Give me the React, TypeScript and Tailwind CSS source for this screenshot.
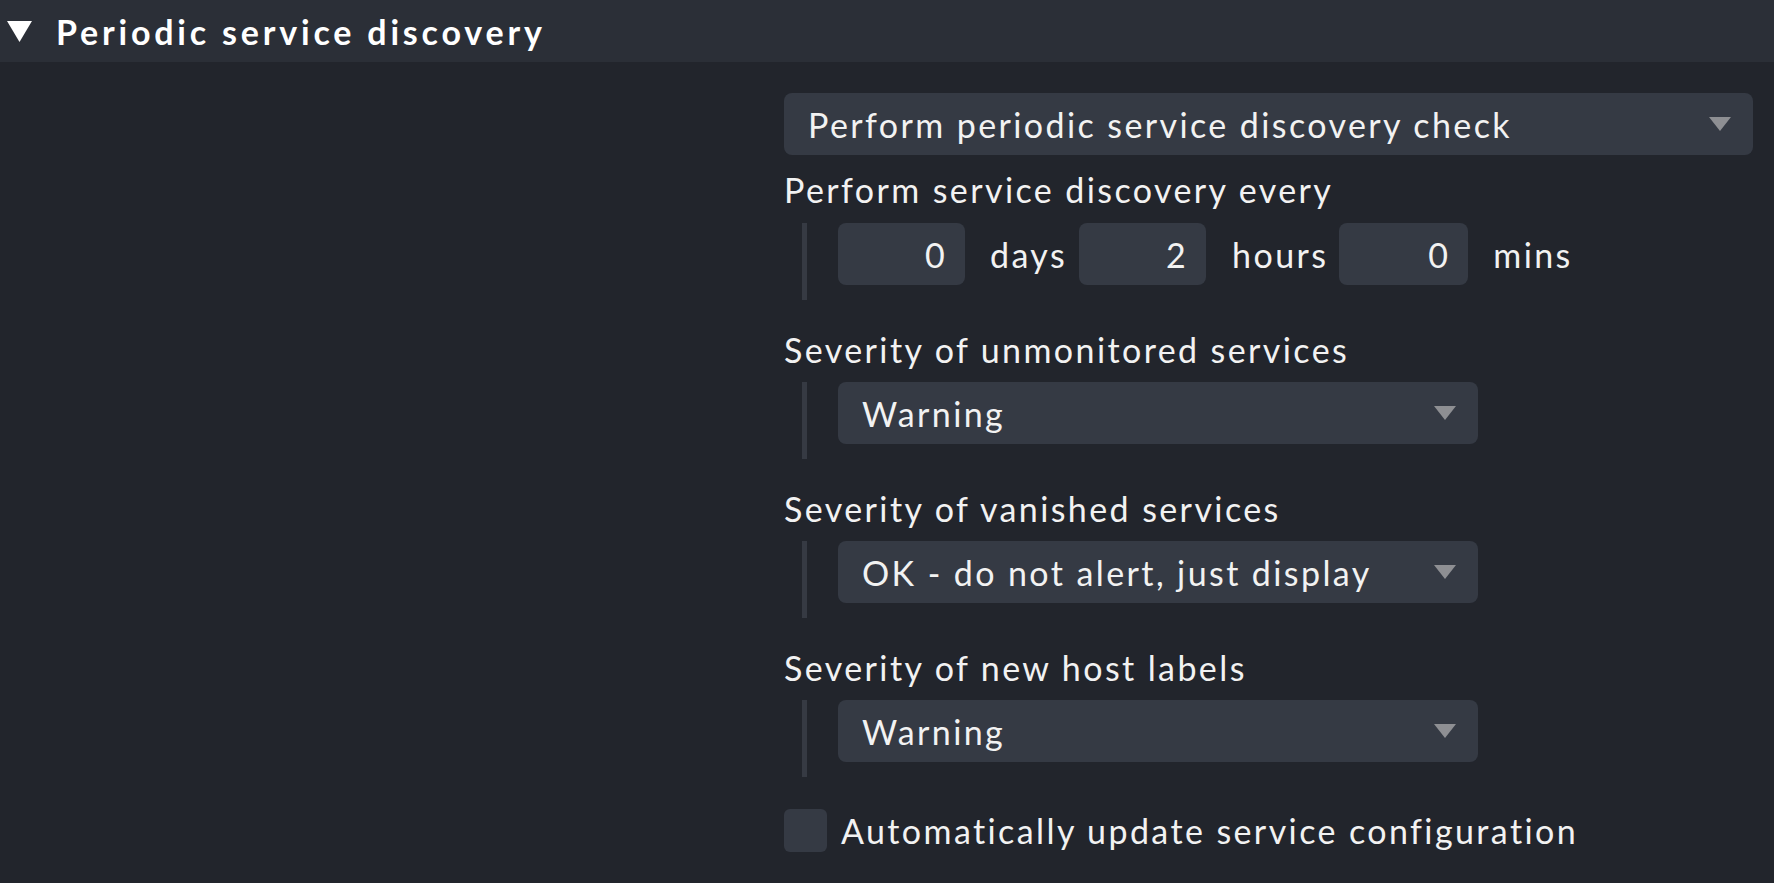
import React from "react";

const Arrow = () => (
  <svg width="22" height="14" viewBox="0 0 22 14" className="shrink-0">
    <polygon points="0,0 22,0 11,14" fill="#8e8f93" />
  </svg>
);

const Select = ({ text, wide }: { text: string; wide?: boolean }) => (
  <div
    className={
      "flex h-[62px] items-center justify-between rounded-[8px] bg-[#353a44] pl-[24px] pr-[22px] " +
      (wide ? "w-[969px]" : "w-[640px]")
    }
  >
    <span>{text}</span>
    <Arrow />
  </div>
);

const NumBox = ({ value, wide }: { value: string; wide?: boolean }) => (
  <div
    className={
      "flex h-[62px] items-center justify-end rounded-[8px] bg-[#353a44] pr-[18px] " +
      (wide ? "w-[129px]" : "w-[127px]")
    }
  >
    {value}
  </div>
);

const Indented = ({ children }: { children: React.ReactNode }) => (
  <div className="ml-[18px] flex border-l-[5px] border-[#363a43] pb-[15px] pl-[31px]">
    {children}
  </div>
);

const Label = ({ text, top }: { text: string; top: string }) => (
  <div className={"h-[44px] leading-[44px] " + top}>{text}</div>
);

const severities = [
  { label: "Severity of unmonitored services", value: "Warning" },
  { label: "Severity of vanished services", value: "OK - do not alert, just display" },
  { label: "Severity of new host labels", value: "Warning" },
];

export default function App() {
  return (
    <div
      className="h-[883px] w-[1774px] overflow-hidden bg-[#22252c] text-[34px] tracking-[2.4px] text-[#f2f2f2]"
      style={{ fontFamily: "Lato, 'Noto Sans', sans-serif" }}
    >
      <div className="flex h-[62px] items-center bg-[#2b2f37] pl-[7px]">
        <svg width="25" height="21" viewBox="0 0 25 21">
          <polygon points="0,0 25,0 12.5,21" fill="#ffffff" />
        </svg>
        <span className="ml-[24px] text-[34px] font-bold tracking-[3.8px] text-white">
          Periodic service discovery
        </span>
      </div>

      <div className="grid grid-cols-[784px_1fr] pt-[31px]">
        <div />
        <div className="flex flex-col">
          <Select text="Perform periodic service discovery check" wide />
          <Label text="Perform service discovery every" top="mt-[13px]" />
          <div className="mt-[11px]">
            <Indented>
              <div className="flex items-center">
                <NumBox value="0" />
                <span className="ml-[25px] mr-[12px]">days</span>
                <NumBox value="2" />
                <span className="ml-[26px] mr-[11px]">hours</span>
                <NumBox value="0" wide />
                <span className="ml-[25px]">mins</span>
              </div>
            </Indented>
          </div>

          {severities.map(({ label, value }) => (
            <div key={label} className="mt-[28px] flex flex-col">
              <Label text={label} top="" />
              <div className="mt-[10px]">
                <Indented>
                  <Select text={value} />
                </Indented>
              </div>
            </div>
          ))}

          <div className="mt-[28px] flex items-center">
            <div className="h-[43px] w-[43px] shrink-0 rounded-[6px] bg-[#353a44]" />
            <span className="ml-[14px]">Automatically update service configuration</span>
          </div>
        </div>
      </div>
    </div>
  );
}
